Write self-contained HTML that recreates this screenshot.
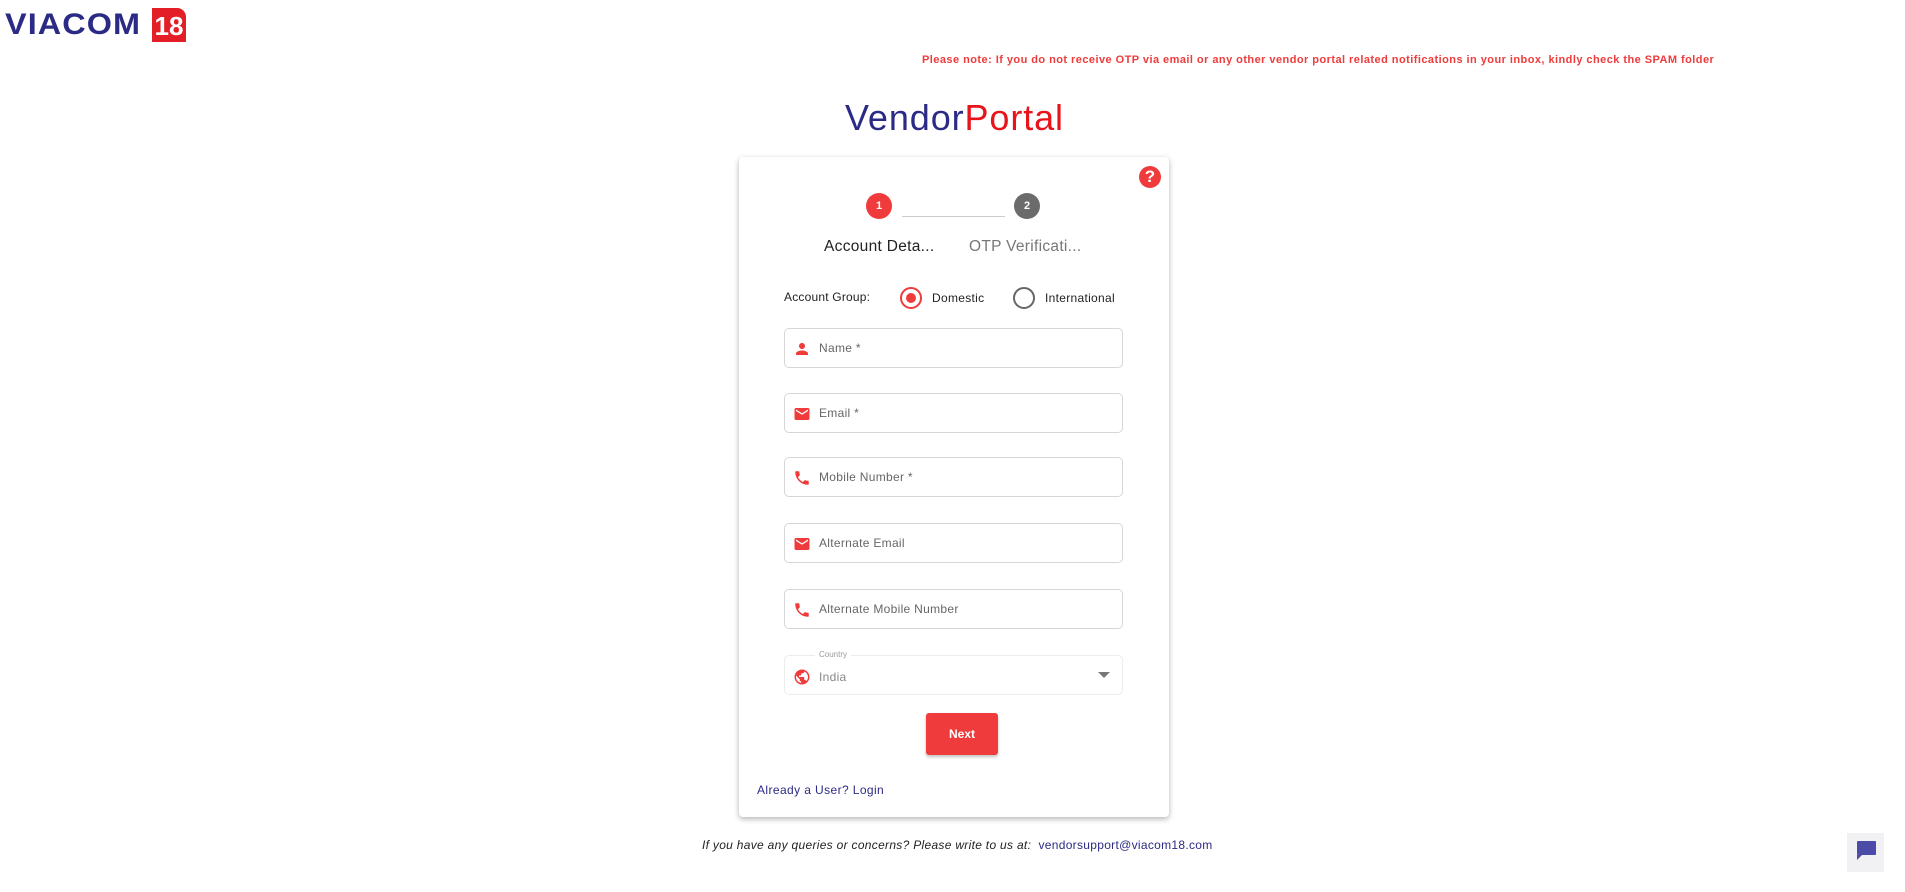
<!DOCTYPE html>
<html><head><meta charset="utf-8"><style>
*{box-sizing:border-box;margin:0;padding:0}
body{width:1905px;height:892px;background:#fff;font-family:"Liberation Sans",sans-serif;position:relative;overflow:hidden;color:#333}
.abs{position:absolute}
.field{position:absolute;left:784px;width:339px;height:40px;border:1px solid #d6d6d6;border-radius:5px}
.field .ic{position:absolute;left:8px;top:11px;width:18px;height:18px}
.field .lb{position:absolute;left:34px;top:12px;font-size:12px;color:#666;letter-spacing:.3px}
</style></head><body>
<div class="abs" style="left:5px;top:8px;height:34px;font-weight:bold;font-size:30px;color:#2b2a85;letter-spacing:1px;line-height:34px;transform:scaleX(1.08);transform-origin:left">VIACOM</div>
<div class="abs" style="left:152px;top:8px;width:34px;height:34px;background:#e41e26;border-top-right-radius:9px;color:#fff;font-weight:bold;font-size:26px;text-align:center;line-height:36px">18</div>
<div class="abs" style="left:922px;top:54px;font-size:11px;font-weight:bold;color:#ef3b3b;white-space:nowrap;letter-spacing:.45px">Please note: If you do not receive OTP via email or any other vendor portal related notifications in your inbox, kindly check the SPAM folder</div>
<div class="abs" style="left:845px;top:97px;font-size:36px;white-space:nowrap;letter-spacing:.9px"><span style="color:#2b2a85">Vendor</span><span style="color:#e8141b">Portal</span></div>
<div class="abs" style="left:739px;top:157px;width:430px;height:660px;background:#fff;border-radius:4px;box-shadow:0 2px 6px rgba(0,0,0,.3)"></div>
<div class="abs" style="left:1139px;top:166px;width:22px;height:22px;border-radius:50%;background:#ef3b3b;color:#fff;font-weight:bold;font-size:17px;text-align:center;line-height:22px">?</div>
<div class="abs" style="left:866px;top:193px;width:26px;height:26px;border-radius:50%;background:#ef3b3b;color:#fff;font-size:11px;font-weight:bold;text-align:center;line-height:26px">1</div>
<div class="abs" style="left:902px;top:216px;width:103px;height:1px;background:#ccc"></div>
<div class="abs" style="left:1014px;top:193px;width:26px;height:26px;border-radius:50%;background:#6b6b6b;color:#fff;font-size:11px;font-weight:bold;text-align:center;line-height:26px">2</div>
<div class="abs" style="left:824px;top:238px;font-size:15.5px;color:#222;letter-spacing:.3px">Account Deta...</div>
<div class="abs" style="left:969px;top:238px;font-size:15.5px;color:#777;letter-spacing:.3px">OTP Verificati...</div>
<div class="abs" style="left:784px;top:290px;font-size:12px;color:#222;letter-spacing:.2px">Account Group:</div>
<div class="abs" style="left:900px;top:287px;width:22px;height:22px;border-radius:50%;border:2px solid #ef3b3b"><div style="margin:4px;width:10px;height:10px;border-radius:50%;background:#ef3b3b"></div></div>
<div class="abs" style="left:932px;top:291px;font-size:12px;color:#222;letter-spacing:.3px">Domestic</div>
<div class="abs" style="left:1013px;top:287px;width:22px;height:22px;border-radius:50%;border:2px solid #666"></div>
<div class="abs" style="left:1045px;top:291px;font-size:12px;color:#222;letter-spacing:.3px">International</div>

<div class="field" style="top:328px"><svg class="ic" viewBox="0 0 24 24"><path fill="#ef3b3b" d="M12 12c2.2 0 4-1.8 4-4s-1.8-4-4-4-4 1.8-4 4 1.8 4 4 4zm0 2c-2.7 0-8 1.3-8 4v2h16v-2c0-2.7-5.300-4-8-4z"/></svg><div class="lb">Name *</div></div>
<div class="field" style="top:393px"><svg class="ic" viewBox="0 0 24 24"><path fill="#ef3b3b" d="M20 4H4c-1.1 0-2 .9-2 2v12c0 1.1.9 2 2 2h16c1.1 0 2-.9 2-2V6c0-1.1-.9-2-2-2zm0 4l-8 5-8-5V6l8 5 8-5v2z"/></svg><div class="lb">Email *</div></div>
<div class="field" style="top:457px"><svg class="ic" viewBox="0 0 24 24"><path fill="#ef3b3b" d="M6.6 10.8c1.4 2.8 3.8 5.1 6.6 6.6l2.2-2.2c.3-.3.7-.4 1-.2 1.1.4 2.3.6 3.6.6.6 0 1 .4 1 1V20c0 .6-.4 1-1 1-9.4 0-17-7.6-17-17 0-.6.4-1 1-1h3.5c.6 0 1 .4 1 1 0 1.3.2 2.5.6 3.6.1.3 0 .7-.2 1L6.6 10.8z"/></svg><div class="lb">Mobile Number *</div></div>
<div class="field" style="top:523px"><svg class="ic" viewBox="0 0 24 24"><path fill="#ef3b3b" d="M20 4H4c-1.1 0-2 .9-2 2v12c0 1.1.9 2 2 2h16c1.1 0 2-.9 2-2V6c0-1.1-.9-2-2-2zm0 4l-8 5-8-5V6l8 5 8-5v2z"/></svg><div class="lb">Alternate Email</div></div>
<div class="field" style="top:589px"><svg class="ic" viewBox="0 0 24 24"><path fill="#ef3b3b" d="M6.6 10.8c1.4 2.8 3.8 5.1 6.6 6.6l2.2-2.2c.3-.3.7-.4 1-.2 1.1.4 2.3.6 3.6.6.6 0 1 .4 1 1V20c0 .6-.4 1-1 1-9.4 0-17-7.6-17-17 0-.6.4-1 1-1h3.5c.6 0 1 .4 1 1 0 1.3.2 2.5.6 3.6.1.3 0 .7-.2 1L6.6 10.8z"/></svg><div class="lb">Alternate Mobile Number</div></div>
<div class="field" style="top:655px;border-color:#ececec"><svg class="ic" style="top:12px" viewBox="0 0 24 24"><path fill="#ef3b3b" d="M12 2C6.5 2 2 6.5 2 12s4.5 10 10 10 10-4.5 10-10S17.5 2 12 2zm-1 17.9c-4-.5-7-3.9-7-7.9 0-.6.1-1.2.2-1.8L9 15v1c0 1.1.9 2 2 2v1.9zm6.9-2.5c-.3-.8-1-1.4-1.9-1.4h-1v-3c0-.6-.4-1-1-1H8v-2h2c.6 0 1-.4 1-1V7h2c1.1 0 2-.9 2-2v-.4c2.9 1.2 5 4.1 5 7.4 0 2.1-.8 4-2.1 5.4z"/></svg>
<div class="abs" style="left:30px;top:-6px;background:#fff;padding:0 4px;font-size:8px;color:#999">Country</div>
<div class="lb" style="top:14px;color:#888">India</div>
<div class="abs" style="right:12px;top:16px;width:0;height:0;border-left:6px solid transparent;border-right:6px solid transparent;border-top:6px solid #777"></div></div>
<div class="abs" style="left:926px;top:713px;width:72px;height:42px;background:#ef3b3b;border-radius:3px;box-shadow:0 2px 3px rgba(0,0,0,.25);color:#fff;font-weight:bold;font-size:12px;text-align:center;line-height:42px">Next</div>
<div class="abs" style="left:757px;top:783px;font-size:12px;color:#2b2a85;letter-spacing:.4px">Already a User? Login</div>
<div class="abs" style="left:702px;top:838px;font-size:12px;color:#222;white-space:nowrap;letter-spacing:.3px"><i>If you have any queries or concerns? Please write to us at:</i>&nbsp; <span style="color:#2b2a85">vendorsupport@viacom18.com</span></div>
<div class="abs" style="left:1847px;top:833px;width:37px;height:39px;background:#f1f1f3"><div style="position:absolute;left:10px;top:8px;width:19px;height:14px;background:#4b4ba8;border-radius:1px"></div><div style="position:absolute;left:10px;top:22px;width:0;height:0;border-top:5px solid #4b4ba8;border-right:5px solid transparent"></div></div>
</body></html>
